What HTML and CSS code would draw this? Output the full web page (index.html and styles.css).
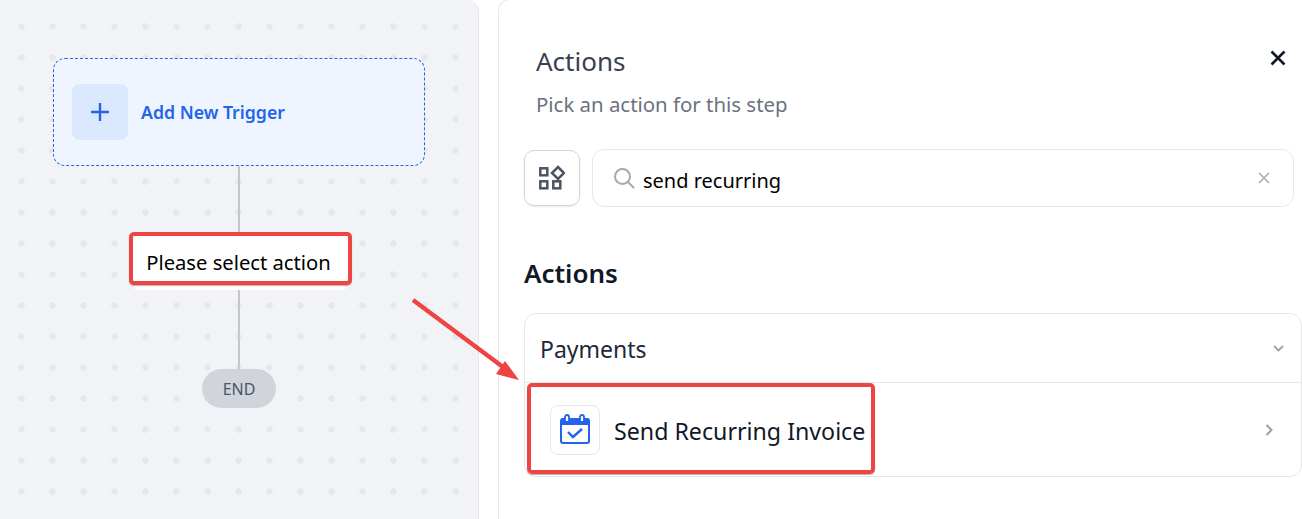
FILE: index.html
```html
<!DOCTYPE html>
<html>
<head>
  <title>Workflow actions</title>
  <link rel="stylesheet" href="styles.css">
</head>
<body>
  <div class="page">
    <div class="canvas">
      <div class="trigger">
        <div class="trigger-icon">
          <svg width="20" height="20" viewBox="0 0 20 20" fill="none" stroke="#2563eb" stroke-width="2.400"><path d="M10 1v18M1 10h18"/></svg>
        </div>
        <span class="trigger-label">Add New Trigger</span>
      </div>
      <div class="line line-top"></div>
      <div class="action-node">
        <div class="action-box">Please select action</div>
      </div>
      <div class="line line-bottom"></div>
      <div class="end-pill">END</div>
    </div>

    <div class="panel">
      <div class="panel-head">
        <div>
          <h1 class="panel-title">Actions</h1>
          <p class="panel-sub">Pick an action for this step</p>
        </div>
        <svg class="close-icon" width="16" height="16" viewBox="0 0 16 16" fill="none" stroke="#111827" stroke-width="2.600"><path d="M1.500 1.500l13 13M14.500 1.500l-13 13"/></svg>
      </div>

      <div class="search-row">
        <div class="filter-btn">
          <svg width="26" height="26" viewBox="0 0 26 26" fill="none" stroke="#4b5563" stroke-width="2.500"><rect x="1.300" y="3.300" width="7" height="7"/><rect x="1.300" y="16.300" width="7" height="7"/><rect x="14.300" y="16.300" width="7" height="7"/><path d="M19 2l6 6-6 6-6-6z"/></svg>
        </div>
        <div class="search-box">
          <svg width="22" height="22" viewBox="0 0 22 22" fill="none" stroke="#a4a9b3" stroke-width="2" stroke-linecap="round"><circle cx="9.500" cy="9.500" r="7.500"/><path d="M15 15l5.500 5.500"/></svg>
          <span class="search-text">send recurring</span>
          <svg class="search-clear" width="12" height="12" viewBox="0 0 12 12" fill="none" stroke="#a4acb9" stroke-width="1.500"><path d="M1 1l10 10M11 1L1 11"/></svg>
        </div>
      </div>

      <h2 class="section-title">Actions</h2>

      <div class="accordion">
        <div class="accordion-head">
          <span class="accordion-label">Payments</span>
          <svg width="11" height="7" viewBox="0 0 11 7" fill="none" stroke="#98a0ad" stroke-width="1.800"><path d="M1 1l4.500 4.500L10 1"/></svg>
        </div>
        <div class="accordion-row">
          <div class="action-item">
            <div class="item-icon">
              <svg class="calendar-icon" width="30" height="30" viewBox="0 0 30 30" fill="none">
                <path d="M3 4h24a2 2 0 0 1 2 2v5H1V6a2 2 0 0 1 2-2z" fill="#2563eb"/>
                <rect x="1" y="5" width="28" height="24" rx="2" stroke="#2563eb" stroke-width="2"/>
                <path d="M5 8V3a2 2 0 0 1 4 0v5zM20 8V3a2 2 0 0 1 4 0v5z" fill="#fff" stroke="#2563eb" stroke-width="1.800"/>
                <path d="M8 18l5 5 9-8" stroke="#2563eb" stroke-width="2.400"/>
              </svg>
            </div>
            <span class="item-label">Send Recurring Invoice</span>
          </div>
          <svg class="row-chevron" width="8" height="12" viewBox="0 0 8 12" fill="none" stroke="#98a0ad" stroke-width="2"><path d="M1.500 1l5 5-5 5"/></svg>
        </div>
      </div>
    </div>
  </div>

  <svg class="arrow" width="120" height="90" viewBox="0 0 120 90">
    <path d="M2 2L96 72" stroke="#ef4444" stroke-width="4.500" fill="none"/>
    <path d="M108 82L85 76L94 63z" fill="#ef4444"/>
  </svg>
</body>
</html>
```

FILE: styles.css
```css
* {
  box-sizing: border-box;
}
html, body {
  height: 100%;
}
body {
  margin: 0;
  overflow: hidden;
  background: #fff;
  font-family: "Noto Sans", Arial, sans-serif;
}
.page {
  display: flex;
  height: 519px;
}
.canvas {
  width: 479px;
  flex-shrink: 0;
  display: flex;
  flex-direction: column;
  align-items: center;
  padding-top: 58px;
  background-color: #f2f3f7;
  background-image: radial-gradient(circle, #e7e8eb 3px, transparent 3.5px);
  background-size: 31px 31px;
  background-position: 6px 11px;
  border-right: 1px solid #e5e7eb;
  border-top-right-radius: 12px;
}
.trigger {
  width: 372px;
  height: 108px;
  display: flex;
  align-items: center;
  gap: 13px;
  padding-left: 18px;
  background: #eef5ff;
  border: 1px dashed #2563eb;
  border-radius: 12px;
}
.trigger-icon {
  width: 56px;
  height: 56px;
  display: flex;
  align-items: center;
  justify-content: center;
  background: #dbe9fe;
  border-radius: 8px;
}
.trigger-label {
  font-size: 17.7px;
  font-weight: 600;
  color: #2563eb;
}
.line {
  width: 2px;
  background: #c4c6cc;
}
.line-top {
  height: 66px;
}
.line-bottom {
  height: 79px;
}
.action-node {
  margin-left: 2px;
  padding-bottom: 5px;
  background: linear-gradient(#fff, #fff) no-repeat center bottom / 210px 10px;
}
.action-box {
  width: 223px;
  height: 53px;
  display: flex;
  align-items: center;
  justify-content: center;
  padding: 7px 3px 0 0;
  font-size: 20.2px;
  color: #000;
  background: #fff;
  border: 4px solid #ef4444;
  border-radius: 5px;
  box-shadow: 0 1px 1px rgba(0, 0, 0, 0.3);
}
.end-pill {
  width: 74px;
  height: 39px;
  display: flex;
  align-items: center;
  justify-content: center;
  font-size: 16px;
  color: #4b5563;
  background: #d1d5db;
  border-radius: 20px;
}
.panel {
  flex: 1;
  margin-left: 19px;
  padding: 0 0 0 25px;
  background: #fff;
  border-left: 1px solid #e5e7eb;
  border-top: 1px solid #e5e7eb;
  border-top-left-radius: 12px;
  margin-top: -1px;
}
.panel-head {
  display: flex;
  justify-content: space-between;
  padding: 43px 16px 0 12px;
}
.panel-title {
  margin: 0;
  font-size: 26px;
  line-height: 36px;
  font-weight: 400;
  color: #374151;
}
.panel-sub {
  margin: 11px 0 0;
  font-size: 20.4px;
  line-height: 28px;
  color: #6b7280;
}
.close-icon {
  margin-top: 7px;
}
.search-row {
  display: flex;
  align-items: center;
  gap: 12px;
  margin-top: 31px;
  padding-right: 8px;
}
.filter-btn {
  width: 56px;
  height: 56px;
  flex-shrink: 0;
  display: flex;
  align-items: center;
  justify-content: center;
  border: 1px solid #d1d5db;
  border-radius: 10px;
  box-shadow: 0 1px 2px rgba(0, 0, 0, 0.08);
}
.search-box {
  flex: 1;
  height: 58px;
  display: flex;
  align-items: center;
  padding: 0 23px 0 20px;
  border: 1px solid #e5e7eb;
  border-radius: 12px;
}
.search-text {
  margin-left: 8px;
  padding-top: 5px;
  font-size: 20px;
  color: #000;
}
.search-clear {
  margin-left: auto;
}
.section-title {
  margin: 48px 0 0;
  font-size: 26px;
  line-height: 36px;
  font-weight: 600;
  color: #111827;
}
.accordion {
  margin-top: 22px;
  border: 1px solid #e5e7eb;
  border-radius: 12px;
}
.accordion-head {
  height: 69px;
  display: flex;
  align-items: center;
  justify-content: space-between;
  padding: 0 17px 0 15px;
  font-size: 23px;
  color: #1f2937;
  border-bottom: 1px solid #e5e7eb;
}
.accordion-label {
  padding-top: 2px;
}
.accordion-row {
  height: 93px;
  display: flex;
  align-items: center;
  justify-content: space-between;
  padding: 0 28px 0 2px;
}
.action-item {
  width: 348px;
  height: 91px;
  margin-bottom: 2px;
  display: flex;
  align-items: center;
  gap: 14px;
  padding: 2px 0 0 19px;
  border: 4px solid #ef4444;
  border-radius: 5px;
  box-shadow: 0 1px 1px rgba(0, 0, 0, 0.3);
}
.item-icon {
  width: 50px;
  height: 50px;
  flex-shrink: 0;
  display: flex;
  align-items: center;
  justify-content: center;
  padding-bottom: 2px;
  border: 1px solid #e5e7eb;
  border-radius: 8px;
}
.calendar-icon {
  flex-shrink: 0;
  overflow: visible;
}
.item-label {
  padding-top: 2px;
  font-size: 23.2px;
  white-space: nowrap;
  color: #111827;
}
.arrow {
  position: absolute;
  left: 411px;
  top: 298px;
}
```
